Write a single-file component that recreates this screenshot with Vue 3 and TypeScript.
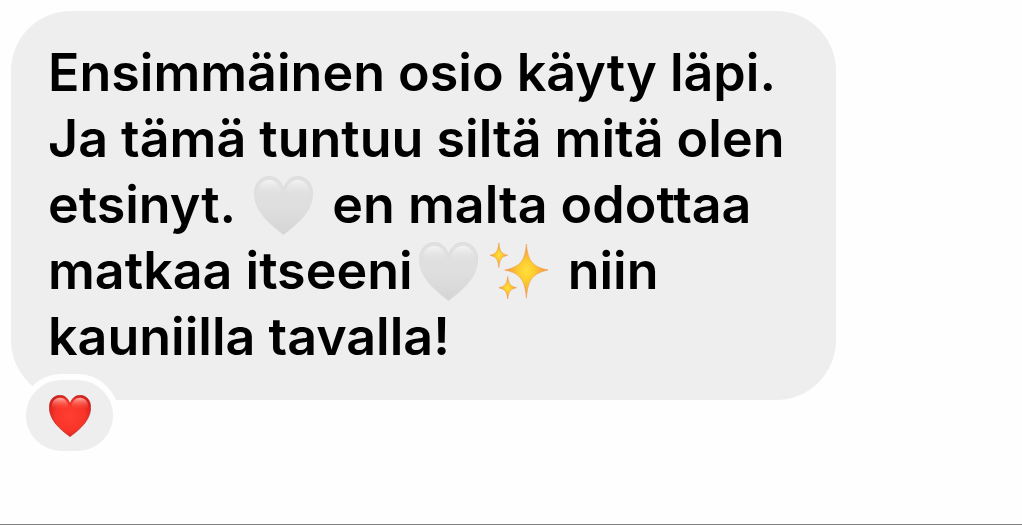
<script setup lang="ts">
type Part = { kind: 'text'; value: string } | { kind: 'heart' } | { kind: 'sparkles' }

const text = (value: string): Part => ({ kind: 'text', value })

const lines: Part[][] = [
  [text('Ensimmäinen osio käyty läpi.')],
  [text('Ja tämä tuntuu siltä mitä olen')],
  [text('etsinyt. '), { kind: 'heart' }, text(' en malta odottaa')],
  [text('matkaa itseeni'), { kind: 'heart' }, { kind: 'sparkles' }, text(' niin')],
  [text('kauniilla tavalla!')],
]

const heartPath =
  'M30 59.5C28.5 58.3 21 53 14.5 46.5C6 38 .5 28.500 .5 17.500C.5 7.500 7 .5 15.500 .5C22.500 .5 27.500 5 30 13C32.500 5 37.500 .5 44.500 .5C53 .5 59.500 7.500 59.500 17.500C59.500 28.500 54 38 45.500 46.500C39 53 31.500 58.300 30 59.500Z'
const shinePath =
  'M4 17C4 9 9 4 15.500 4C22 4 26 9 28 16C22 22 10 23 4 17ZM32 16C34 9 38 4 44.500 4C51 4 56 9 56 17C50 23 38 22 32 16Z'
</script>

<template>
  <main class="chat">
    <svg class="defs" aria-hidden="true">
      <defs>
        <linearGradient id="white-heart" x1="0" y1="0" x2="0" y2="1">
          <stop offset="0" stop-color="#e0e0e0" />
          <stop offset="0.5" stop-color="#dfdfdf" />
          <stop offset="1" stop-color="#d6d5d6" />
        </linearGradient>
        <linearGradient id="white-shine" x1="0" y1="0" x2="0" y2="1">
          <stop offset="0" stop-color="#f4f4f4" />
          <stop offset="1" stop-color="#e0e0e0" stop-opacity="0" />
        </linearGradient>
        <radialGradient id="red-heart" cx="0.5" cy="0.5" r="0.6">
          <stop offset="0" stop-color="#ff3f30" />
          <stop offset="0.6" stop-color="#f93429" />
          <stop offset="1" stop-color="#cf1c1a" />
        </radialGradient>
        <linearGradient id="red-shine" x1="0" y1="0" x2="0" y2="1">
          <stop offset="0" stop-color="#ffb0a4" />
          <stop offset="1" stop-color="#ff4436" stop-opacity="0" />
        </linearGradient>
        <radialGradient id="spark">
          <stop offset="0" stop-color="#ffe03c" />
          <stop offset="0.4" stop-color="#fdca2e" />
          <stop offset="1" stop-color="#f08a4a" />
        </radialGradient>
      </defs>
    </svg>

    <article class="message">
      <p class="bubble">
        <span v-for="(line, i) in lines" :key="i" class="line"
          ><template v-for="(part, j) in line" :key="j"
            ><template v-if="part.kind === 'text'">{{ part.value }}</template
            ><svg v-else-if="part.kind === 'heart'" class="emoji" viewBox="0 0 60 60" role="img" aria-label="Valkoinen sydän">
              <path :d="heartPath" fill="url(#white-heart)" stroke="#dcdcdc" />
              <path :d="shinePath" fill="url(#white-shine)" /></svg
            ><svg v-else class="emoji" viewBox="0 0 60 60" role="img" aria-label="Kimalle">
              <g fill="url(#spark)" stroke="#f0a552" stroke-width="0.7" stroke-linejoin="round">
                <path d="M37 2C38.500 18 42 25 59 28.500C42 32 38.500 40 37 57C35.500 40 32 32 15 28.500C32 25 35.500 18 37 2Z" />
                <path d="M9 1C10 9 11 12 18 13.500C11 15 10 18 9 26C8 18 7 15 0 13.500C7 12 8 9 9 1Z" />
                <path d="M18 35C19 42 20 45 27 46.500C20 48 19 51 18 58C17 51 16 48 9 46.500C16 45 17 42 18 35Z" />
              </g></svg></template
        ></span>
      </p>
      <button class="reaction" type="button" aria-label="Reaktio: punainen sydän">
        <svg class="reaction-icon" viewBox="0 0 60 60" aria-hidden="true">
          <path :d="heartPath" fill="url(#red-heart)" stroke="#bd2924" />
          <path :d="shinePath" fill="url(#red-shine)" />
        </svg>
      </button>
    </article>
  </main>
</template>

<style>
body {
  margin: 0;
  background: #fff;
}
</style>

<style scoped>
.chat {
  box-sizing: border-box;
  min-height: 100vh;
  padding: 11px;
  border-bottom: 1px solid #808080;
  background: #fefefe;
}

.defs {
  position: absolute;
  width: 0;
  height: 0;
}

.message {
  position: relative;
  max-width: 825px;
}

.bubble {
  margin: 0;
  padding: 29px 36px 30px 37px;
  border-radius: 60px;
  background: #eee;
  color: #000;
  font-family: Inter, 'Liberation Sans', sans-serif;
  font-size: 52px;
  font-weight: 600;
  font-feature-settings: 'calt' 0, 'liga' 0, 'dlig' 0;
  line-height: 66px;
}

.line {
  display: block;
  white-space: pre-wrap;
}

.emoji {
  width: 59px;
  height: 59px;
  margin: 0 6px;
  vertical-align: -12px;
}

.reaction {
  position: absolute;
  left: 9px;
  bottom: -57px;
  display: flex;
  align-items: center;
  justify-content: center;
  box-sizing: border-box;
  width: 99px;
  height: 83px;
  padding: 0;
  border: 6px solid #fefefe;
  border-radius: 42px;
  background: #eee;
}

.reaction-icon {
  width: 42px;
  height: 42px;
}
</style>
